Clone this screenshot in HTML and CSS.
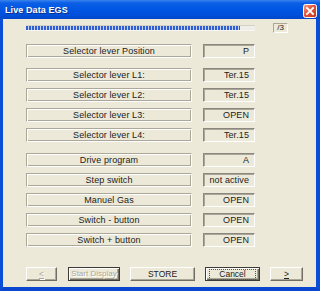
FILE: index.html
```html
<!DOCTYPE html>
<html>
<head>
<meta charset="utf-8">
<link rel="stylesheet" href="styles.css">
</head>
<body>
<div class="window">
  <div class="titlebar">
    <span class="title">Live Data EGS</span>
    <svg class="close" width="14" height="14" viewBox="0 0 14 14">
      <defs>
        <linearGradient id="cg" x1="0" y1="0" x2="1" y2="1">
          <stop offset="0" stop-color="#f4a58a"/>
          <stop offset="0.45" stop-color="#e2553a"/>
          <stop offset="1" stop-color="#c2361c"/>
        </linearGradient>
      </defs>
      <rect x="0.5" y="0.5" width="13" height="13" rx="2" fill="url(#cg)" stroke="#fff"/>
      <path d="M4 4 L10 10 M10 4 L4 10" stroke="#fff" stroke-width="1.8" stroke-linecap="square"/>
    </svg>
  </div>
  <div class="frame">
    <div class="client">
      <div class="progress-row">
        <div class="progress"><div class="fill" style="width:214px"></div></div>
        <div class="page">/3</div>
      </div>

      <div class="group first">
        <div class="row"><div class="label">Selector lever Position</div><div class="value">P</div></div>
      </div>

      <div class="group">
        <div class="row"><div class="label">Selector lever L1:</div><div class="value">Ter.15</div></div>
        <div class="row"><div class="label">Selector lever L2:</div><div class="value">Ter.15</div></div>
        <div class="row"><div class="label">Selector lever L3:</div><div class="value">OPEN</div></div>
        <div class="row"><div class="label">Selector lever L4:</div><div class="value">Ter.15</div></div>
      </div>

      <div class="group">
        <div class="row"><div class="label">Drive program</div><div class="value">A</div></div>
        <div class="row"><div class="label">Step switch</div><div class="value">not active</div></div>
        <div class="row"><div class="label">Manuel Gas</div><div class="value">OPEN</div></div>
        <div class="row"><div class="label">Switch - button</div><div class="value">OPEN</div></div>
        <div class="row"><div class="label">Switch + button</div><div class="value">OPEN</div></div>
      </div>

      <div class="buttons">
        <div class="btn disabled w-prev"><u>&lt;</u></div>
        <div class="btn disabled default w-start">Start Display</div>
        <div class="btn w-store">STORE</div>
        <div class="btn default focus w-cancel"><span>Cancel</span></div>
        <div class="btn w-next"><u>&gt;</u></div>
      </div>
    </div>
  </div>
</div>
</body>
</html>
```

FILE: styles.css
```css
html, body {
  margin: 0;
  padding: 0;
  width: 320px;
  height: 291px;
  overflow: hidden;
  background: #ece9d8;
}

body {
  font-family: "Liberation Sans", Arial, sans-serif;
  font-size: 9px;
  color: #000;
}

.window {
  display: flex;
  flex-direction: column;
  width: 320px;
  height: 291px;
}

.titlebar {
  height: 19px;
  flex: none;
  display: flex;
  align-items: center;
  justify-content: space-between;
  padding: 0 3px 0 5px;
  background: linear-gradient(#3b82ee 0, #0b5fe6 3px, #0055e3 10px, #0050da 15px, #0046c8 19px);
}

.title {
  color: #fff;
  font-weight: bold;
  font-size: 9px;
  letter-spacing: 0.1px;
  text-shadow: 1px 1px 0 #0a2f8c;
  margin-top: 1px;
}

.close {
  display: block;
  margin-top: 2px;
}

.frame {
  flex: 1;
  display: flex;
  border-left: 3px solid #0a4ed8;
  border-right: 4px solid #0a4ed8;
  border-bottom: 4px solid #0a45d0;
}

.client {
  flex: 1;
  background: #ece9d8;
  padding: 4px 0 0 23px;
}

.progress-row {
  display: flex;
  align-items: center;
  height: 10px;
}

.progress {
  width: 229px;
  height: 6px;
  box-sizing: border-box;
  background: #efeee9;
  border-top: 1px solid #d3d1c7;
  border-bottom: 1px solid #f7f6f2;
  border-radius: 1px;
  overflow: hidden;
}

.fill {
  height: 100%;
  background: repeating-linear-gradient(90deg, #2f5fd0 0, #2f5fd0 2px, #c9d3ef 2px, #c9d3ef 3px);
}

.page {
  margin-left: 18px;
  width: 15px;
  height: 10px;
  box-sizing: border-box;
  border: 1px solid;
  border-color: #aca899 #fff #fff #aca899;
  font-size: 8px;
  line-height: 8px;
  text-align: center;
  color: #222;
}

.group {
  display: flex;
  flex-direction: column;
  gap: 6px;
  margin-top: 11px;
}

.group.first {
  margin-top: 11px;
  margin-bottom: -1px;
}

.row {
  display: grid;
  grid-template-columns: 166px 52px;
  column-gap: 11px;
  height: 14px;
}

.label {
  box-sizing: border-box;
  height: 14px;
  border: 1px solid;
  border-color: #aca899 #fff #fff #aca899;
  box-shadow: inset 1px 1px 0 #fff, inset -1px -1px 0 #aca899;
  text-align: center;
  line-height: 12px;
  color: #222;
  letter-spacing: 0.1px;
}

.value {
  box-sizing: border-box;
  height: 14px;
  border: 1px solid;
  border-color: #8a877c #fff #fff #8a877c;
  box-shadow: inset 1px 1px 0 #a9a699;
  text-align: right;
  padding-right: 5px;
  line-height: 12px;
  color: #222;
  letter-spacing: 0.1px;
}

.buttons {
  display: flex;
  margin-top: 20px;
  gap: 10px;
}

.btn {
  box-sizing: border-box;
  height: 14px;
  border: 1px solid;
  border-color: #fff #716f64 #716f64 #fff;
  box-shadow: inset -1px -1px 0 #aca899;
  text-align: center;
  line-height: 12px;
  font-size: 8.5px;
  color: #222;
  white-space: nowrap;
}

.btn.default {
  border: 1px solid #3c3b37;
  box-shadow: inset 1px 1px 0 #fff, inset -1px -1px 0 #716f64, inset -2px -2px 0 #aca899;
}

.btn.disabled {
  color: #aca899;
  text-shadow: 1px 1px 0 #fff;
}

.btn.focus span {
  display: block;
  margin: 1px 3px;
  height: 9px;
  line-height: 9px;
  border: 1px dotted #555;
}

.w-prev { width: 31px; margin-right: 1px; }
.w-start { width: 52px; font-size: 8px; }
.w-store { width: 65px; }
.w-cancel { width: 55px; }
.w-next { width: 33px; }
```
